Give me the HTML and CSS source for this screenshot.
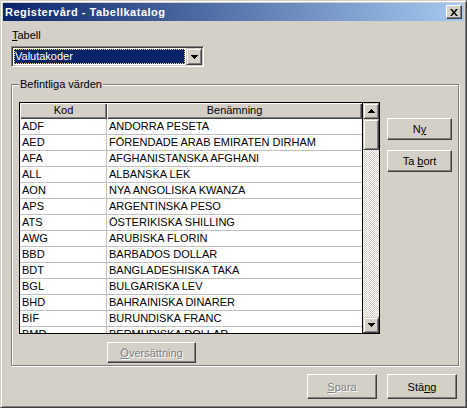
FILE: index.html
```html
<!DOCTYPE html>
<html lang="sv">
<head>
<meta charset="utf-8">
<title>Registervård - Tabellkatalog</title>
<link rel="stylesheet" href="styles.css">
</head>
<body>
<div class="window">
  <div class="titlebar">
    <span class="title">Registervård - Tabellkatalog</span>
    <span class="close-btn"><svg width="8" height="7" viewBox="0 0 8 7"><path d="M0 0h2l2 2.4 2-2.4h2l-3 3.5 3 3.5h-2l-2-2.4-2 2.4h-2l3-3.5z" fill="#000"/></svg></span>
  </div>
  <div class="content">
    <div class="field-label"><u>T</u>abell</div>
    <div class="combo">
      <div class="combo-value">Valutakoder</div>
      <div class="combo-btn"><svg width="7" height="4" viewBox="0 0 7 4" shape-rendering="crispEdges"><polygon points="0,0 7,0 3.5,4" fill="#000"/></svg></div>
    </div>
    <div class="group">
      <div class="legend">Befintliga värden</div>
      <div class="group-body">
        <div class="list-col">
          <div class="listview">
            <div class="grid">
              <div class="ghead"><div class="hcell c1">Kod</div><div class="hcell c2">Benämning</div></div>
              <div class="row"><div class="cell c1">ADF</div><div class="cell c2">ANDORRA PESETA</div></div>
              <div class="row"><div class="cell c1">AED</div><div class="cell c2">FÖRENDADE ARAB EMIRATEN DIRHAM</div></div>
              <div class="row"><div class="cell c1">AFA</div><div class="cell c2">AFGHANISTANSKA AFGHANI</div></div>
              <div class="row"><div class="cell c1">ALL</div><div class="cell c2">ALBANSKA LEK</div></div>
              <div class="row"><div class="cell c1">AON</div><div class="cell c2">NYA ANGOLISKA KWANZA</div></div>
              <div class="row"><div class="cell c1">APS</div><div class="cell c2">ARGENTINSKA PESO</div></div>
              <div class="row"><div class="cell c1">ATS</div><div class="cell c2">ÖSTERIKISKA SHILLING</div></div>
              <div class="row"><div class="cell c1">AWG</div><div class="cell c2">ARUBISKA FLORIN</div></div>
              <div class="row"><div class="cell c1">BBD</div><div class="cell c2">BARBADOS DOLLAR</div></div>
              <div class="row"><div class="cell c1">BDT</div><div class="cell c2">BANGLADESHISKA TAKA</div></div>
              <div class="row"><div class="cell c1">BGL</div><div class="cell c2">BULGARISKA LEV</div></div>
              <div class="row"><div class="cell c1">BHD</div><div class="cell c2">BAHRAINISKA DINARER</div></div>
              <div class="row"><div class="cell c1">BIF</div><div class="cell c2">BURUNDISKA FRANC</div></div>
              <div class="row"><div class="cell c1">BMD</div><div class="cell c2">BERMUDISKA DOLLAR</div></div>
            </div>
            <div class="vscroll">
              <div class="sbtn"><svg width="7" height="4" viewBox="0 0 7 4" shape-rendering="crispEdges"><polygon points="0,4 7,4 3.5,0" fill="#000"/></svg></div>
              <div class="thumb"></div>
              <div class="track"></div>
              <div class="sbtn"><svg width="7" height="4" viewBox="0 0 7 4" shape-rendering="crispEdges"><polygon points="0,0 7,0 3.5,4" fill="#000"/></svg></div>
            </div>
          </div>
          <button class="btn btn-translate" disabled><u>Ö</u>versättning</button>
        </div>
        <div class="side">
          <button class="btn btn-side">N<u>y</u></button>
          <button class="btn btn-side">Ta <u>b</u>ort</button>
        </div>
      </div>
    </div>
    <div class="footer">
      <button class="btn btn-foot" disabled><u>S</u>para</button>
      <button class="btn btn-foot">Stä<u>n</u>g</button>
    </div>
  </div>
</div>
</body>
</html>
```
FILE: styles.css
```css
* { box-sizing: border-box; }

body {
  margin: 0;
  font-family: "Liberation Sans", Arial, sans-serif;
  font-size: 11px;
  color: #000;
  background: #d4d0c8;
}

.window {
  width: 467px;
  height: 408px;
  background: #d4d0c8;
  border: 1px solid;
  border-color: #d4d0c8 #404040 #404040 #d4d0c8;
  box-shadow: inset 1px 1px 0 #fff, inset -1px -1px 0 #808080;
  padding: 2px;
  display: flex;
  flex-direction: column;
}

.titlebar {
  height: 18px;
  flex: none;
  background: linear-gradient(to right, #0a246a, #a6caf0);
  display: flex;
  align-items: center;
  justify-content: space-between;
  padding: 0 2px;
}

.title {
  color: #fff;
  font-weight: bold;
  letter-spacing: 0.5px;
  line-height: 18px;
}

.close-btn {
  width: 16px;
  height: 14px;
  background: #d4d0c8;
  border: 1px solid;
  border-color: #fff #404040 #404040 #fff;
  box-shadow: inset -1px -1px 0 #808080;
  display: flex;
  align-items: center;
  justify-content: center;
}

.content {
  flex: 1;
  padding: 8px 7px 0 8px;
  display: flex;
  flex-direction: column;
}

.field-label {
  line-height: 13px;
  margin-left: 1px;
}

.combo {
  width: 193px;
  height: 21px;
  margin-top: 4px;
  background: #fff;
  border: 1px solid;
  border-color: #808080 #fff #fff #808080;
  box-shadow: inset 1px 1px 0 #404040, inset -1px -1px 0 #d4d0c8;
  padding: 1px;
  display: flex;
}

.combo-value {
  flex: 1;
  margin: 1px 1px 1px 1px;
  background: #0a246a;
  color: #fff;
  outline: 1px dotted #f5db95;
  outline-offset: -1px;
  padding-left: 1px;
  line-height: 15px;
}

.combo-btn,
.sbtn,
.thumb {
  background: #d4d0c8;
  border: 1px solid;
  border-color: #d4d0c8 #404040 #404040 #d4d0c8;
  box-shadow: inset 1px 1px 0 #fff, inset -1px -1px 0 #808080;
  display: flex;
  align-items: center;
  justify-content: center;
}

.combo-btn {
  width: 16px;
  flex: none;
}

.group {
  margin-top: 17px;
  width: 448px;
  height: 282px;
  flex: none;
  border: 1px solid #808080;
  box-shadow: inset 1px 1px 0 #fff, 1px 1px 0 #fff;
  display: flex;
  flex-direction: column;
}

.legend {
  align-self: flex-start;
  margin: -7px 0 0 7px;
  padding: 0 1px;
  background: #d4d0c8;
  line-height: 13px;
}

.group-body {
  display: flex;
  margin-top: 11px;
  padding-left: 7px;
}

.list-col {
  display: flex;
  flex-direction: column;
}

.listview {
  width: 361px;
  height: 232px;
  border: 1px solid #000;
  background: #fff;
  display: flex;
}

.grid {
  width: 343px;
  border-right: 1px solid #000;
  overflow: hidden;
}

.ghead {
  display: flex;
  height: 16px;
}

.hcell {
  background: #d4d0c8;
  box-shadow: inset 1px 1px 0 #fff, inset -1px -1px 0 #404040, inset -2px -2px 0 #808080;
  text-align: center;
  line-height: 15px;
}

.c1 { width: 87px; flex: none; }
.c2 { width: 255px; flex: none; }

.row {
  display: flex;
  height: 16px;
  border-bottom: 1px solid #c0c0c0;
  line-height: 15px;
}

.cell {
  padding-left: 2px;
  white-space: nowrap;
}

.row .c1 {
  border-right: 1px solid #c0c0c0;
}

.vscroll {
  width: 16px;
  flex: none;
  display: flex;
  flex-direction: column;
}

.sbtn {
  height: 16px;
  flex: none;
}

.thumb {
  height: 31px;
  flex: none;
}

.track {
  flex: 1;
  background-image: repeating-conic-gradient(#fff 0 25%, #d4d0c8 0 50%);
  background-size: 2px 2px;
}

.btn {
  font: inherit;
  color: #000;
  padding: 0;
  background: #d4d0c8;
  border: 1px solid;
  border-color: #fff #404040 #404040 #fff;
  box-shadow: inset -1px -1px 0 #808080;
  text-align: center;
}

.btn:disabled {
  color: #808080;
  text-shadow: 1px 1px 0 #fff;
}

.btn-translate {
  margin: 8px 0 0 88px;
  width: 89px;
  height: 21px;
}

.side {
  display: flex;
  flex-direction: column;
  gap: 10px;
  padding-top: 16px;
  margin-left: 7px;
}

.btn-side {
  width: 65px;
  height: 22px;
}

.footer {
  display: flex;
  justify-content: flex-end;
  gap: 10px;
  margin-top: 8px;
}

.btn-foot {
  width: 70px;
  height: 25px;
}
```
